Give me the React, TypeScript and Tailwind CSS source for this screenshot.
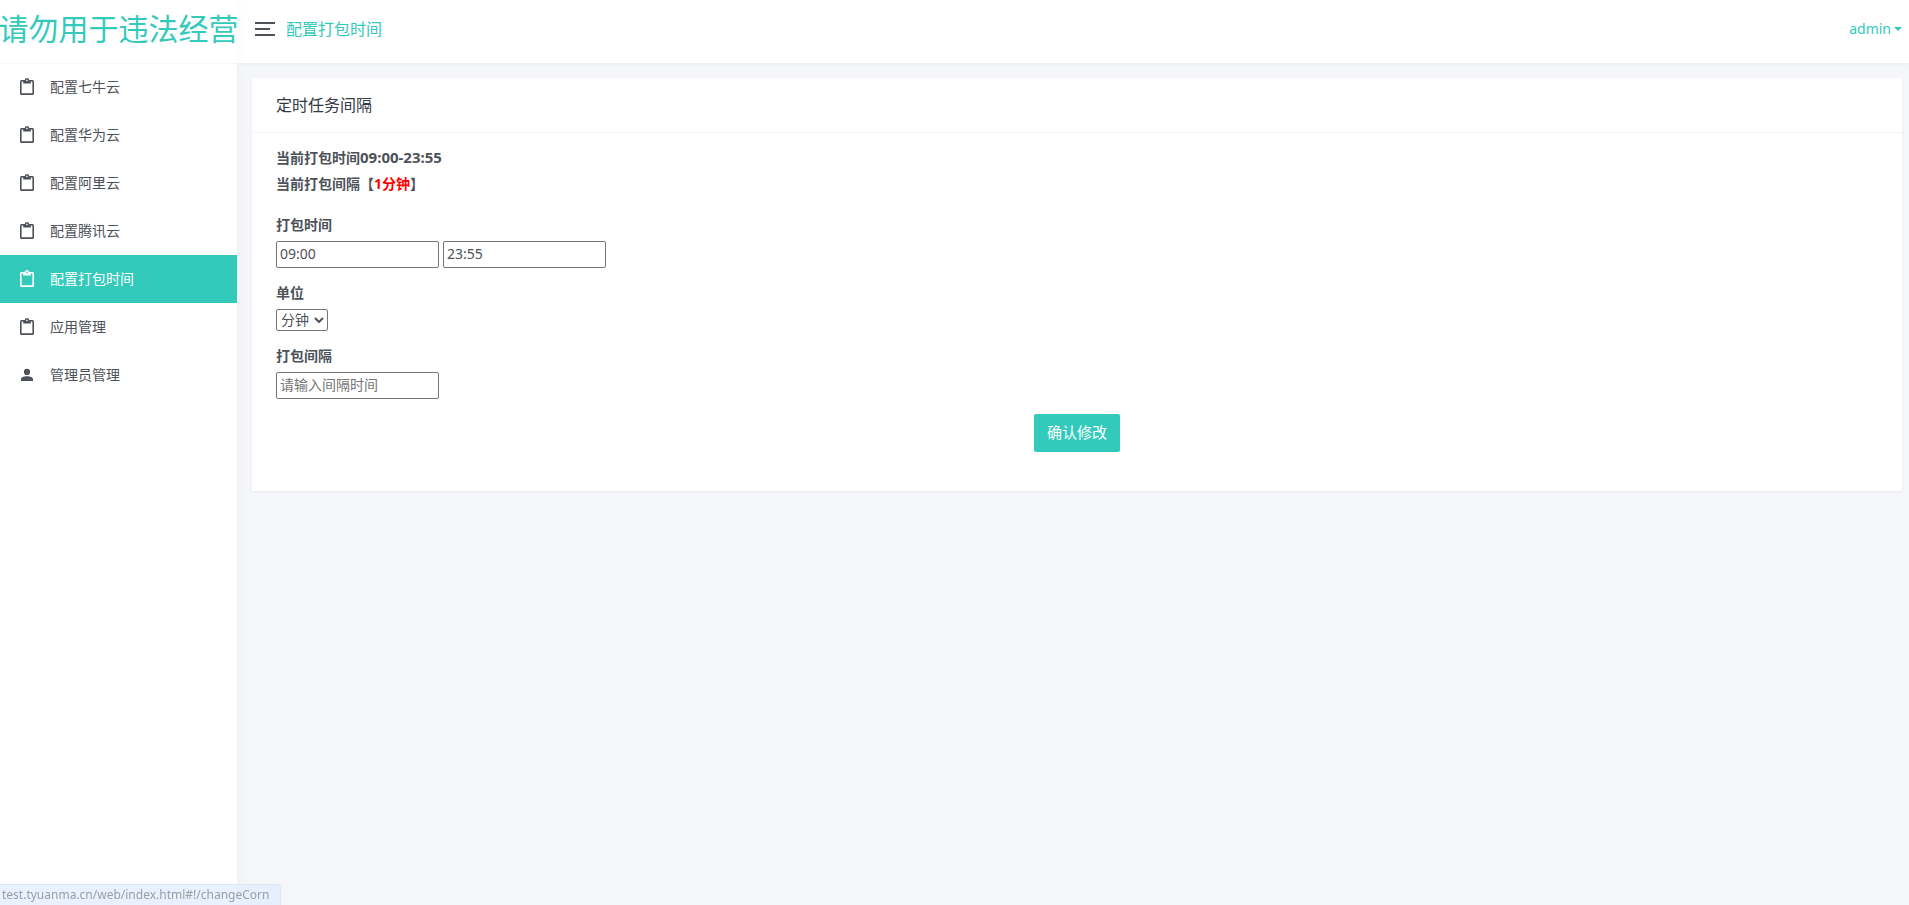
import { useState } from "react";

const clipboardPath =
  "M4.5,3H7.7C8,1.8 8.9,1 10,1C11.1,1 12,1.8 12.3,3H15.5A1.5,1.5 0 0,1 17,4.5V16.5A1.5,1.5 0 0,1 15.5,18H4.5A1.5,1.5 0 0,1 3,16.5V4.5A1.5,1.5 0 0,1 4.5,3M10,2.6A0.8,0.8 0 0,0 10,4.2A0.8,0.8 0 0,0 10,2.6M4.6,4.6V16.2H15.4V4.6H13.8V6.4H6.2V4.6H4.6Z";
const accountPath =
  "M10,3.8A3.1,3.1 0 0,1 10,10A3.1,3.1 0 0,1 10,3.8M10,11.2C13.5,11.2 16,12.4 16,14.2V16H4V14.2C4,12.4 6.5,11.2 10,11.2Z";

const menu = [
  { label: "配置七牛云", icon: clipboardPath },
  { label: "配置华为云", icon: clipboardPath },
  { label: "配置阿里云", icon: clipboardPath },
  { label: "配置腾讯云", icon: clipboardPath },
  { label: "配置打包时间", icon: clipboardPath, active: true },
  { label: "应用管理", icon: clipboardPath },
  { label: "管理员管理", icon: accountPath },
];

function Sidebar() {
  return (
    <aside className="z-10 flex w-[237px] shrink-0 flex-col bg-white shadow-[0_0_8px_rgba(0,0,0,0.04)]">
      <a
        href="#home"
        className="flex h-[63px] items-center justify-center whitespace-nowrap pb-1 text-[30px] text-[#33cabb]"
      >
        请勿用于违法经营
      </a>
      <nav className="border-t border-[#f7f7f8]">
        <ul className="-mt-px">
          {menu.map((item) => (
            <li key={item.label}>
              <a
                href="#!/changeCorn"
                aria-current={item.active ? "page" : undefined}
                className={
                  item.active
                    ? "flex h-12 items-center gap-[13px] bg-[#33cabb] pl-[17px] text-white"
                    : "flex h-12 items-center gap-[13px] pl-[17px] text-[#4d5259]"
                }
              >
                <svg viewBox="0 0 20 20" className="size-5 fill-current" aria-hidden="true">
                  <path fillRule="evenodd" d={item.icon} />
                </svg>
                <span>{item.label}</span>
              </a>
            </li>
          ))}
        </ul>
      </nav>
    </aside>
  );
}

function Topbar() {
  return (
    <header className="flex h-[63px] items-center justify-between bg-white pb-[5px] pl-[18px] pr-[7px] text-[#33cabb] shadow-[0_1px_4px_rgba(0,0,0,0.04)]">
      <div className="flex items-center gap-[11px]">
        <button type="button" aria-label="切换菜单" className="flex w-5 flex-col gap-1">
          <span className="h-0.5 w-5 bg-[#4d5259]" />
          <span className="h-0.5 w-[15px] bg-[#4d5259]" />
          <span className="h-0.5 w-5 bg-[#4d5259]" />
        </button>
        <span className="text-base">配置打包时间</span>
      </div>
      <button type="button" className="flex items-center gap-[3px] text-sm">
        admin
        <svg viewBox="0 0 8 4" className="h-1 w-2 fill-current" aria-hidden="true">
          <path d="M0 0h8L4 4z" />
        </svg>
      </button>
    </header>
  );
}

const inputClass =
  "h-[27px] w-[163px] rounded-[2px] border border-[#767676] bg-white px-[3px] pb-0.5 text-[#4d5259] placeholder:text-[#757575]";

export default function App() {
  const [start, setStart] = useState("09:00");
  const [end, setEnd] = useState("23:55");
  const [gap, setGap] = useState("");

  return (
    <div className="flex min-h-screen bg-[#f4f6fa] font-['Noto_Sans','Noto_Sans_CJK_SC',sans-serif] text-sm text-[#4d5259]">
      <Sidebar />
      <div className="min-w-0 flex-1">
        <Topbar />
        <main className="pl-[15px] pr-[7px] pt-[15px]">
          <section className="bg-white pb-[39px] shadow-[0_1px_3px_rgba(0,0,0,0.06)]">
            <h4 className="flex h-[55px] items-center border-b border-[#f3f4f5] px-6 text-base text-[#313944]">
              定时任务间隔
            </h4>
            <form className="px-6 pt-[11px]" onSubmit={(e) => e.preventDefault()}>
              <p className="font-bold leading-[26px]">
                当前打包时间<span className="text-[15px]">09:00-23:55</span>
              </p>
              <p className="font-bold leading-[26px]">
                当前打包间隔【<span className="text-[#ff0000]">1分钟</span>】
              </p>
              <div className="pt-[18px]">
                <label htmlFor="start" className="block h-[26px] font-bold">
                  打包时间
                </label>
                <div className="flex gap-1">
                  <input id="start" className={inputClass} value={start} onChange={(e) => setStart(e.target.value)} />
                  <input
                    aria-label="结束时间"
                    className={inputClass}
                    value={end}
                    onChange={(e) => setEnd(e.target.value)}
                  />
                </div>
              </div>
              <div className="pt-[15px]">
                <label htmlFor="unit" className="block h-[26px] font-bold">
                  单位
                </label>
                <div className="relative w-[52px]">
                  <select
                    id="unit"
                    className="block h-[22px] w-full appearance-none rounded-[2px] border border-[#767676] bg-white pl-1 leading-5"
                  >
                    <option>分钟</option>
                    <option>小时</option>
                  </select>
                  <svg
                    viewBox="0 0 10 6"
                    className="pointer-events-none absolute right-1 top-2 h-1.5 w-2.5 fill-none stroke-current stroke-2"
                    aria-hidden="true"
                  >
                    <path d="M1 1l4 4 4-4" />
                  </svg>
                </div>
              </div>
              <div className="pt-[15px]">
                <label htmlFor="gap" className="block h-[26px] font-bold">
                  打包间隔
                </label>
                <input
                  id="gap"
                  className={`block ${inputClass}`}
                  placeholder="请输入间隔时间"
                  value={gap}
                  onChange={(e) => setGap(e.target.value)}
                />
              </div>
              <div className="flex justify-center pt-[15px]">
                <button
                  type="submit"
                  className="h-[38px] w-[86px] rounded-[2px] bg-[#33cabb] text-[15px] text-white"
                >
                  确认修改
                </button>
              </div>
            </form>
          </section>
        </main>
      </div>
      <div className="fixed bottom-0 left-0 z-20 flex h-[21px] w-[281px] items-center rounded-tr border-r border-t border-[#dfe5f0] bg-[#e1edff]/80 pl-0.5 text-xs text-[#9c9fa3]">
        test.tyuanma.cn/web/index.html#!/changeCorn
      </div>
    </div>
  );
}
